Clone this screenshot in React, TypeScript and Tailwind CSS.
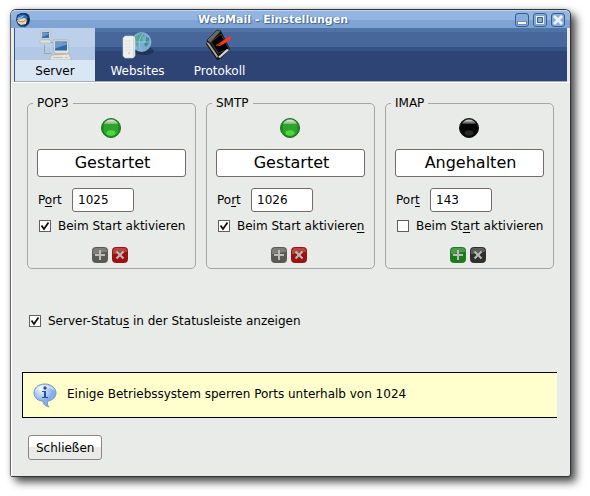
import { useState, type ReactNode } from 'react';

function ThunderbirdIcon() {
  return (
    <svg viewBox="0 0 16 16" className="size-4" aria-hidden="true">
      <path d="M2 3 6 1h5l3 2 1 4-1 5-4 3H6l-3-2-2-5z" fill="#17376b" />
      <path d="M3 4c4-3 9-1 10 2l-4 1-6 1z" fill="#2f6fb4" />
      <path d="m2 6 8-3-3 3-4 2z" fill="#7db4e6" />
      <path d="m2 8 7-2 3 1-1 5-5 1-3-2z" fill="#ecd9b0" />
      <path d="m3 9 5 1 4-3" stroke="#b08b55" fill="none" />
      <path d="M12 4c2 3 1 7-3 10l4-2 2-4z" fill="#0b2454" />
      <path d="M3 12c2 2 4 2 7 1l-2 2-3-1z" fill="#286baf" />
    </svg>
  );
}

function ServerIcon() {
  return (
    <svg viewBox="0 0 34 32" className="h-8 w-[34px]" aria-hidden="true">
      <path d="M6.500 17v8.500h7M12 14.500h6" stroke="#9aa3b0" fill="none" />
      <path d="M3 3h9l1 7-1 1H4l-1-2z" fill="#dcdcd5" stroke="#a8adb5" strokeWidth=".5" />
      <path d="M4 4h7v6H4z" fill="#3a6ca8" />
      <path d="m4 4 7 1v1L4 9z" fill="#6b9bcc" />
      <path d="M2 12h10l1 3H2z" fill="#e4e2db" stroke="#aaa" strokeWidth=".5" />
      <path d="M15 12h15l1 12-2 2H18l-2-2z" fill="#e2e1da" stroke="#9ca5af" strokeWidth=".6" />
      <path d="M17 13.500h12v9H17z" fill="#3068a8" />
      <path d="m17 13.500 12 1v2l-12 4z" fill="#6b9bcc" />
      <path d="M17 25h11v2H17z" fill="#b9b9b3" />
      <path d="m14 27 17-1 2 4v2H12v-2z" fill="#e8e5dc" stroke="#aaa69e" strokeWidth=".6" />
      <path d="M15 29.500h10M27 29.500h3" stroke="#c2c0b8" />
    </svg>
  );
}

function WebsitesIcon() {
  return (
    <svg viewBox="0 0 34 32" className="h-8 w-[34px]" aria-hidden="true">
      <ellipse cx="23" cy="23" rx="10" ry="4" fill="#172742" opacity=".55" />
      <circle cx="20.500" cy="14" r="9.500" fill="#78acd2" stroke="#a5c8e0" strokeWidth=".6" />
      <path d="m14 9 6-4 4 2-3 3 1 3-4 1-1 5-3-4z" fill="#52a797" />
      <path d="m25 9 3 1v5l-3 4-2-3 2-2z" fill="#438f8c" />
      <path d="M22 6c-5 5-5 12-1 17M12 14h17" stroke="#a8cee3" strokeWidth=".7" fill="none" />
      <path d="m2 10 2-2h8l2 2v18l-2 2H4l-2-2z" fill="#eff0ed" stroke="#cbd0d2" strokeWidth=".6" />
      <path d="M12 10h1v19h-1z" fill="#d1d5d7" />
      <path d="M4 13h6M4 16h6M4 19h6M4 22h6" stroke="#dddeda" />
      <circle cx="8" cy="25" r="1" fill="#c5cbd0" />
    </svg>
  );
}

function ProtocolIcon() {
  return (
    <svg viewBox="0 0 34 32" className="h-8 w-[34px]" aria-hidden="true">
      <path d="m4 12 10-10 4 1 9 18-10 10-3 1L3 16z" fill="#111" />
      <path d="m4 12 10-10 4 1L7 15z" fill="#6a6862" stroke="#111" strokeWidth=".5" />
      <path d="m8 14 10-8 8 15-11 4z" fill="#010101" stroke="#69635b" strokeWidth=".6" />
      <path d="m3 14 3 1 9 13-1 2z" fill="#aaa49c" />
      <path d="m15 29 9-8 2 1-9 8z" fill="#ddd9d1" />
      <path d="m13 17 5-3 7-5 3-1v3l-4 3-7 4h-4z" fill="#f43a1c" />
      <path d="m12 18 5-3 1 2-3 1z" fill="#98301e" />
    </svg>
  );
}

function InfoIcon() {
  return (
    <svg viewBox="0 0 24 25" className="h-[25px] w-6 shrink-0" aria-hidden="true">
      <defs>
        <radialGradient id="bubble" cx=".35" cy=".25">
          <stop stopColor="#f4f8ff" />
          <stop offset="1" stopColor="#86aceb" />
        </radialGradient>
      </defs>
      <path d="M12 1C5 1 1 5 1 10s4 8 9 8c0 3 2 5 6 6-2-2-2-4-1-6 5-1 8-4 8-8 0-5-5-9-11-9z" fill="url(#bubble)" stroke="#7d94bd" />
      <path d="M12 2C6 2 3 5 2 9c3-3 6-4 10-4s7 1 10 3c-1-4-5-6-10-6z" fill="#fff" opacity=".45" />
      <circle cx="12" cy="5" r="1.700" fill="#2452a4" />
      <path d="M9 8h4v6h2v1H9v-1h2V9H9z" fill="#2452a4" />
    </svg>
  );
}

function StatusLight({ on }: { on: boolean }) {
  return (
    <svg viewBox="0 0 20 20" className="size-5" role="img" aria-label={on ? 'Gestartet' : 'Angehalten'}>
      <defs>
        <linearGradient id={on ? 'shine-on' : 'shine-off'} x2="0" y2="1">
          <stop stopColor="#ededed" />
          <stop offset="1" stopColor={on ? '#7ab374' : '#333'} />
        </linearGradient>
      </defs>
      <circle cx="10" cy="10" r="9.500" fill={on ? '#218c21' : '#050505'} stroke={on ? '#177417' : '#171717'} />
      <path d="M3 6c2-6 12-6 14 0z" fill={on ? 'url(#shine-on)' : 'url(#shine-off)'} />
      <path d="M3 6v8c2 5 12 5 14 0V6z" fill={on ? '#2aa62a' : '#050505'} />
      <ellipse cx="10" cy="15" rx="4.500" ry="2.800" fill={on ? '#53d446' : '#2a2827'} />
    </svg>
  );
}

function TinyButton({ kind, active, label, onClick }: { kind: 'start' | 'stop'; active: boolean; label: string; onClick: () => void }) {
  const fill = !active ? (kind === 'start' ? '#5b5954' : '#302f2c') : kind === 'start' ? '#1d7b1d' : '#9e1111';
  return (
    <button type="button" aria-label={label} onClick={onClick}>
      <svg viewBox="0 0 16 16" className="block size-4" aria-hidden="true">
        <rect x=".5" y=".5" width="15" height="15" rx="3" fill={fill} stroke={fill} />
        <path d="M1 7V3l2-2h10l2 2v2C9 5 6 7 1 7z" fill="#fff" opacity=".22" />
        <path d={kind === 'start' ? 'M8 3v10M3 8h10' : 'm4.500 4.500 7 7m0-7-7 7'} stroke="#bdbcb7" strokeWidth="2" />
      </svg>
    </button>
  );
}

function Tick({ id, checked, onChange }: { id: string; checked: boolean; onChange: (v: boolean) => void }) {
  return (
    <span className="grid size-3 shrink-0">
      <input id={id} type="checkbox" checked={checked} onChange={(e) => onChange(e.target.checked)}
        className="peer col-start-1 row-start-1 size-3 appearance-none border border-[#655d5d] bg-white" />
      <svg viewBox="0 0 12 12" className="pointer-events-none invisible col-start-1 row-start-1 size-3 peer-checked:visible" aria-hidden="true">
        <path d="m2.500 5.500 2.500 3.500 4.500-6.500" stroke="#111" strokeWidth="1.800" fill="none" />
      </svg>
    </span>
  );
}

const U = ({ children }: { children: ReactNode }) => <span className="underline underline-offset-2">{children}</span>;

type PanelProps = { name: string; port: string; running: boolean; portLabel: ReactNode; startLabel: ReactNode };

function ServerPanel({ name, port, running, portLabel, startLabel }: PanelProps) {
  const [on, setOn] = useState(running);
  const [auto, setAuto] = useState(running);
  const [value, setValue] = useState(port);
  return (
    <fieldset className="min-w-0 rounded-[5px] border border-[#a6a6a4] px-[9px] pb-[5px]">
      <legend className="-ml-1 px-1 leading-4">{name}</legend>
      <div className="flex flex-col pt-[7px]">
        <div className="flex justify-center pr-[2px]"><StatusLight on={on} /></div>
        <button type="button" onClick={() => setOn(!on)}
          className="mt-[11px] h-7 rounded-[3px] border border-[#756b6e] bg-white pl-[2px] text-base leading-6">
          {on ? 'Gestartet' : 'Angehalten'}
        </button>
        <div className="mt-[11px] flex items-center pl-px">
          <label htmlFor={`${name}-port`} className="w-[34px] shrink-0">{portLabel}</label>
          <input id={`${name}-port`} value={value} onChange={(e) => setValue(e.target.value)}
            className="h-6 w-[62px] rounded-[3px] border border-[#756b6e] bg-white px-[5px]" />
        </div>
        <div className="mt-[6px] flex items-center gap-[7px] pl-[2px]">
          <Tick id={`${name}-auto`} checked={auto} onChange={setAuto} />
          <label htmlFor={`${name}-auto`} className="leading-4 whitespace-nowrap">{startLabel}</label>
        </div>
        <div className="mt-[13px] flex justify-center gap-1 pr-[4px]">
          <TinyButton kind="start" active={!on} label="Starten" onClick={() => setOn(true)} />
          <TinyButton kind="stop" active={on} label="Anhalten" onClick={() => setOn(false)} />
        </div>
      </div>
    </fieldset>
  );
}

const tabs = [
  { name: 'Server', Icon: ServerIcon },
  { name: 'Websites', Icon: WebsitesIcon },
  { name: 'Protokoll', Icon: ProtocolIcon },
];

function WindowButton({ label, children }: { label: string; children: ReactNode }) {
  return (
    <button type="button" aria-label={label}>
      <svg viewBox="0 0 14 14" className="block size-[14px]" aria-hidden="true">
        <rect x=".5" y=".5" width="13" height="13" rx="2.500" fill="#8badd9" stroke="#315d91" />
        {children}
      </svg>
    </button>
  );
}

export default function App() {
  const [tab, setTab] = useState('Server');
  const [status, setStatus] = useState(true);
  return (
    <div className="bg-white pt-[9px] pr-[19px] pb-[19px] pl-[10px] font-['DejaVu_Sans',sans-serif] text-xs text-black">
      <main className="rounded-t-[6px] rounded-b-[3px] border border-[#33373b] border-l-[#666] bg-[#e9ebe8] shadow-[5px_5px_8px_0_rgba(0,0,0,0.7),0_0_5px_rgba(0,0,0,0.15)]">
        <header className="flex h-[18px] items-center rounded-t-[5px] border-t border-[#bfd6f2] bg-[linear-gradient(#94b5e1_50%,#7fa4d3_50%)] pr-[5px] pl-[4px]">
          <ThunderbirdIcon />
          <h1 className="flex-1 text-center text-[11px] leading-4 font-bold text-white [text-shadow:1px_1px_1px_#40658f,-1px_0_1px_#557eac]">WebMail - Einstellungen</h1>
          <div className="flex gap-1">
            <WindowButton label="Minimieren"><path d="M2.500 8.500h9v3h-9z" fill="#fff" stroke="#315d91" strokeWidth=".6" /></WindowButton>
            <WindowButton label="Maximieren">
              <path d="M2.500 2.500h9v9h-9z" fill="#edf4ff" stroke="#5c83b5" strokeWidth=".6" />
              <path d="M4.500 4.500h5v5h-5z" fill="#8badd9" stroke="#315d91" />
            </WindowButton>
            <WindowButton label="Fenster schließen"><path d="m3 3 8 8m0-8-8 8" stroke="#edf4ff" strokeWidth="2.800" /></WindowButton>
          </div>
        </header>
        <nav className="mx-[3px] flex h-[54px] border-b border-l border-b-[#aaa] border-l-[#35568a] bg-[linear-gradient(#4f73a7_0_4px,#47669a_4px_19px,#345384_19px_23px,#2e4475_23px)]">
          {tabs.map(({ name, Icon }) => (
            <button key={name} type="button" onClick={() => setTab(name)} aria-pressed={tab === name}
              className={`flex flex-col items-center ${tab === name ? 'w-20 bg-[linear-gradient(#bccfeb_0_19px,#b3c8e4_19px_32px,#d9e6f3_32px)] text-black' : 'w-[82px] pl-[3px] text-white'}`}>
              <Icon />
              <span className="pt-[3px] leading-4">{name}</span>
            </button>
          ))}
        </nav>
        <div className="border-t border-l border-white pr-[13px] pb-4 pl-[10px]">
          <div className="pt-[12px] pr-[3px] pl-[5px]">
            <div className="grid grid-cols-3 gap-[10px]">
              <ServerPanel name="POP3" port="1025" running portLabel={<>P<U>o</U>rt</>} startLabel="Beim Start aktivieren" />
              <ServerPanel name="SMTP" port="1026" running portLabel={<>Po<U>r</U>t</>} startLabel={<>Beim Start aktiviere<U>n</U></>} />
              <ServerPanel name="IMAP" port="143" running={false} portLabel={<>Por<U>t</U></>} startLabel={<>Beim St<U>a</U>rt aktivieren</>} />
            </div>
            <div className="mt-11 flex items-center gap-[7px] pl-[2px]">
              <Tick id="show-status" checked={status} onChange={setStatus} />
              <label htmlFor="show-status" className="leading-4">Server-Statu<U>s</U> in der Statusleiste anzeigen</label>
            </div>
          </div>
          <div className="mt-[43px] flex items-start gap-[10px] border-y border-l border-black bg-[#ffffce] pt-[10px] pb-[9px] pl-[10px]">
            <InfoIcon />
            <p className="pt-[3px] leading-4">Einige Betriebssystem sperren Ports unterhalb von 1024</p>
          </div>
          <button type="button" className="mt-[17px] ml-[6px] h-[25px] rounded-[3px] border border-[#8e8584] bg-[linear-gradient(#fff_50%,#eaebe9_50%)] px-[7px]">Schließen</button>
        </div>
      </main>
    </div>
  );
}
